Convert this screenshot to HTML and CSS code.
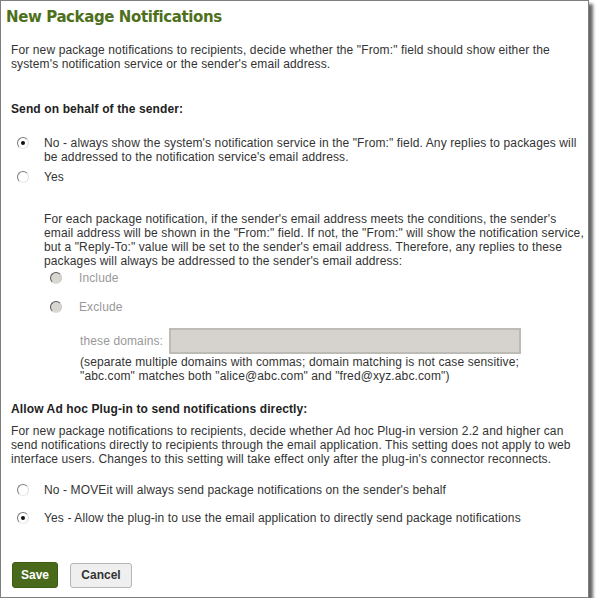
FILE: index.html
```html
<!DOCTYPE html>
<html>
<head>
<title>New Package Notifications</title>
<meta http-equiv="Content-Type" content="text/html; charset=utf-8" />
<link rel="stylesheet" href="styles.css">
</head>
<body>
<div class="panel">
	<h1 class="title">New Package Notifications</h1>
	<p class="intro">For new package notifications to recipients, decide whether the "From:" field should show either the<br>system's notification service or the sender's email address.</p>

	<h2 class="section">Send on behalf of the sender:</h2>
	<div class="option option-top">
		<input type="radio" name="behalf" class="radio" checked>
		<label>No - always show the system's notification service in the "From:" field. Any replies to packages will<br>be addressed to the notification service's email address.</label>
	</div>
	<div class="option option-yes">
		<input type="radio" name="behalf" class="radio">
		<label>Yes</label>
	</div>
	<div class="sub">
		<p class="sub-text">For each package notification, if the sender's email address meets the conditions, the sender's<br>email address will be shown in the "From:" field. If not, the "From:" will show the notification service,<br>but a "Reply-To:" value will be set to the sender's email address. Therefore, any replies to these<br>packages will always be addressed to the sender's email address:</p>
		<div class="sub-option sub-include">
			<input type="radio" name="scope" class="radio" disabled>
			<label>Include</label>
		</div>
		<div class="sub-option sub-exclude">
			<input type="radio" name="scope" class="radio" disabled>
			<label>Exclude</label>
		</div>
		<div class="domains">
			<label>these domains:</label>
			<input type="text" class="domain-input" disabled>
		</div>
		<p class="note">(separate multiple domains with commas; domain matching is not case sensitive;<br>"abc.com" matches both "alice@abc.com" and "fred@xyz.abc.com")</p>
	</div>

	<h2 class="section section-adhoc">Allow Ad hoc Plug-in to send notifications directly:</h2>
	<p class="intro intro-adhoc">For new package notifications to recipients, decide whether Ad hoc Plug-in version 2.2 and higher can<br>send notifications directly to recipients through the email application. This setting does not apply to web<br>interface users. Changes to this setting will take effect only after the plug-in's connector reconnects.</p>
	<div class="option option-adhoc-no">
		<input type="radio" name="adhoc" class="radio">
		<label>No - MOVEit will always send package notifications on the sender's behalf</label>
	</div>
	<div class="option option-adhoc-yes">
		<input type="radio" name="adhoc" class="radio" checked>
		<label>Yes - Allow the plug-in to use the email application to directly send package notifications</label>
	</div>

	<div class="actions">
		<button class="btn btn-save">Save</button>
		<button class="btn btn-cancel">Cancel</button>
	</div>
</div>
</body>
</html>
```

FILE: styles.css
```css
* {margin:0;padding:0;box-sizing:border-box;}
body {background:#fff;font-family:"Liberation Sans",Arial,sans-serif;font-size:12px;line-height:14px;letter-spacing:0.12px;color:#333;}
p,label {white-space:nowrap;}
.panel {width:589px;height:598px;border:1px solid #7f7f7f;background:#fff;padding:0 0 0 10px;box-shadow:4px 4px 3px rgba(0,0,0,.6);}
.title {font-family:"DejaVu Sans",Verdana,sans-serif;font-size:15px;line-height:18px;font-weight:bold;letter-spacing:-0.4px;color:#4e6f1b;margin:7px 0 0 -5px;}
.intro {margin-top:17px;}
.section {font-size:12px;line-height:14px;font-weight:bold;color:#222;margin-top:31px;}
.option {display:flex;align-items:flex-start;padding-left:6px;}
.option label {margin-left:15px;}
.option-top {margin-top:20px;}
.option-yes {margin-top:6px;}
.radio {appearance:none;-webkit-appearance:none;flex:none;width:12px;height:12px;border-radius:50%;border:1px solid;border-color:#7a7a7a #dcdcdc #e8e8e8 #7a7a7a;background:#fff;margin-top:1px;position:relative;}
.radio:checked::after {content:"";position:absolute;left:3px;top:3px;width:4px;height:4px;border-radius:50%;background:#111;}
.radio:disabled {background:#d8d6d0;border-color:#555 #c8c6c0 #e0ded8 #555;}
.sub {padding-left:33px;}
.sub-text {margin-top:28px;}
.sub-option {display:flex;align-items:flex-start;padding-left:6px;color:#999;}
.sub-option label {margin-left:17px;}
.sub-include {margin-top:3px;}
.sub-exclude {margin-top:15px;}
.domains {display:flex;align-items:center;margin:14px 0 0 36px;color:#999;}
.domain-input {width:352px;height:26px;margin-left:6px;border:2px solid #bdbbb5;background:#d6d3ce;}
.note {margin:1px 0 0 36px;}
.section-adhoc {margin-top:19px;}
.intro-adhoc {margin-top:8px;}
.option-adhoc-no {margin-top:17px;}
.option-adhoc-yes {margin-top:14px;}
.actions {display:flex;align-items:center;gap:12px;margin:37px 0 0 1px;}
.btn {font-family:"Liberation Sans",Arial,sans-serif;font-size:12px;font-weight:bold;border-radius:3px;cursor:pointer;}
.btn-save {width:46px;height:26px;background:#4a6a1b;color:#fff;border:1px solid #3f5c15;}
.btn-cancel {width:62px;height:25px;background:#efefef;color:#333;border:1px solid #b5b5b5;}
```
